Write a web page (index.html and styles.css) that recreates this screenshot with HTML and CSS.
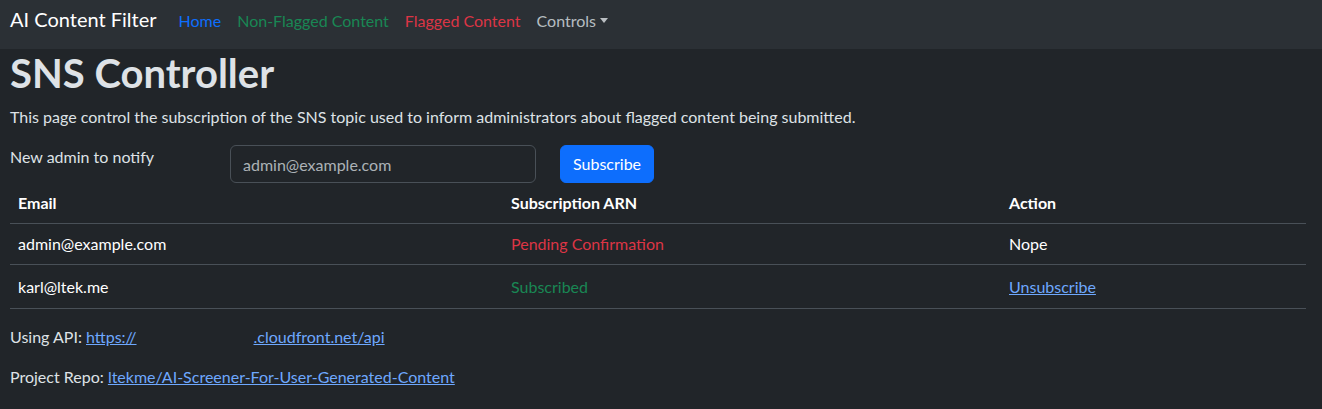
FILE: index.html
```html
<!DOCTYPE html>
<html lang="en">
<head>
<meta charset="utf-8">
<title>SNS Controller</title>
<link rel="stylesheet" href="styles.css">
</head>
<body>
<nav class="navbar">
  <a class="brand" href="#">AI Content Filter</a>
  <ul class="nav">
    <li><a class="nav-link link-home" href="#">Home</a></li>
    <li><a class="nav-link link-ok" href="#">Non-Flagged Content</a></li>
    <li><a class="nav-link link-flag" href="#">Flagged Content</a></li>
    <li><a class="nav-link link-controls" href="#">Controls<span class="caret"></span></a></li>
  </ul>
</nav>
<main class="page">
  <h1 class="title">SNS Controller</h1>
  <p class="lead">This page control the subscription of the SNS topic used to inform administrators about flagged content being submitted.</p>
  <form class="sub-form">
    <label class="sub-label" for="email">New admin to notify</label>
    <input class="sub-input" id="email" type="email" placeholder="admin@example.com">
    <button class="sub-btn" type="button">Subscribe</button>
  </form>
  <table class="subs">
    <thead>
      <tr><th class="c-email">Email</th><th class="c-arn">Subscription ARN</th><th>Action</th></tr>
    </thead>
    <tbody>
      <tr><td>admin@example.com</td><td class="st-pending">Pending Confirmation</td><td>Nope</td></tr>
      <tr><td>karl@ltek.me</td><td class="st-ok">Subscribed</td><td><a class="unsub" href="#">Unsubscribe</a></td></tr>
    </tbody>
  </table>
  <p class="meta">Using API: <a href="#">https://<span class="redact"></span>.cloudfront.net/api</a></p>
  <p class="meta">Project Repo: <a href="#">ltekme/AI-Screener-For-User-Generated-Content</a></p>
</main>
</body>
</html>
```

FILE: styles.css
```css
* { box-sizing: border-box; }
html, body { margin: 0; }
body {
  background: #212529;
  color: #dee2e6;
  font-family: "Lato", "Open Sans", sans-serif;
  font-size: 16px;
  line-height: 1.5;
}
a { color: #6ea8fe; }
.navbar {
  display: flex;
  align-items: baseline;
  height: 49px;
  padding: 4px 10px 0;
  background: #2b3035;
}
.brand {
  color: #fff;
  font-size: 20px;
  line-height: 30px;
  text-decoration: none;
  margin-right: 14px;
}
.nav { display: flex; align-items: baseline; list-style: none; margin: 0; padding: 0; }
.nav-link { display: block; padding: 0 8px; line-height: 24px; text-decoration: none; }
.link-home { color: #0d6efd; }
.link-ok { color: #198754; }
.link-flag { color: #dc3545; }
.link-controls { color: rgba(222,226,230,.8); }
.caret {
  display: inline-block;
  margin-left: 4px;
  vertical-align: 4px;
  border-top: 5px solid;
  border-left: 4px solid transparent;
  border-right: 4px solid transparent;
}
.page { padding: 0 16px 0 10px; }
.title { margin: 0 0 8px; font-size: 40px; line-height: 48px; font-weight: 700; }
.lead { margin: 0 0 16px; }
.sub-form { display: flex; align-items: flex-start; }
.sub-label { width: 220px; line-height: 24px; }
.sub-input {
  width: 306px; height: 38px;
  padding: 6px 12px;
  font: inherit;
  color: #dee2e6;
  background: #212529;
  border: 1px solid #495057;
  border-radius: 6px;
  margin-right: 24px;
}
.sub-input::placeholder { color: rgba(222,226,230,.75); }
.sub-btn {
  width: 94px; height: 38px;
  font: inherit;
  color: #fff;
  background: #0d6efd;
  border: 1px solid #0d6efd;
  border-radius: 6px;
  padding: 6px 12px;
}
.subs {
  width: 1296px;
  border-collapse: collapse;
  margin-bottom: 16px;
  color: #fff;
  vertical-align: top;
}
.subs th, .subs td {
  padding: 8px;
  text-align: left;
  border-bottom: 1px solid #495057;
}
.subs th { font-weight: 700; }
.c-email { width: 493px; }
.c-arn { width: 498px; }
.st-pending { color: #dc3545; }
.st-ok { color: #198754; }
.unsub { display: inline-block; padding-top: 2px; padding-bottom: 1px; }
.meta { margin: 0 0 16px; }
.redact { display: inline-block; width: 117px; }
```
